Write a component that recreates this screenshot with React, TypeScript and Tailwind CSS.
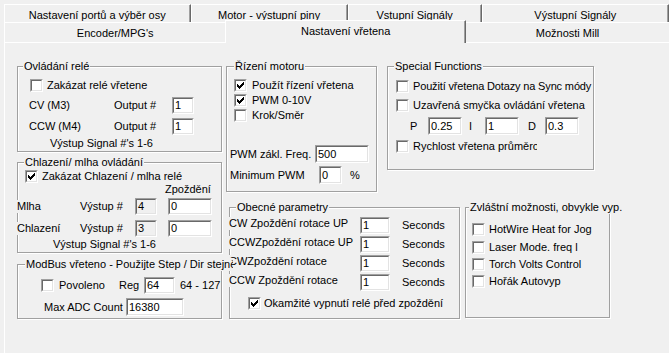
import React from "react";

const Check = ({ checked = false }: { checked?: boolean }) => (
  <span className="inline-block shrink-0 w-[13px] h-[13px] border border-t-[#a0a0a0] border-l-[#a0a0a0] border-r-white border-b-white">
    <span className="flex items-center justify-center w-full h-full border border-t-[#696969] border-l-[#696969] border-r-[#e3e3e3] border-b-[#e3e3e3] bg-white">
      {checked && (
        <svg width="7" height="7" viewBox="0 0 7 7" shapeRendering="crispEdges">
          <path
            d="M0 2h1v3h-1z M1 3h1v3h-1z M2 4h1v3h-1z M3 3h1v3h-1z M4 2h1v3h-1z M5 1h1v3h-1z M6 0h1v3h-1z"
            fill="#000"
          />
        </svg>
      )}
    </span>
  </span>
);

const Edit = ({ value, cls, gray = false }: { value: string; cls: string; gray?: boolean }) => (
  <div className={`shrink-0 border border-t-[#a0a0a0] border-l-[#a0a0a0] border-r-white border-b-white ${cls}`}>
    <div
      className={`flex items-center h-full pl-[1px] border border-t-[#696969] border-l-[#696969] border-r-[#e3e3e3] border-b-[#e3e3e3] ${
        gray ? "bg-[#f0f0f0]" : "bg-white"
      }`}
    >
      {value}
    </div>
  </div>
);

const Group = ({
  title,
  titleCls,
  cls,
  children,
}: {
  title: string;
  titleCls: string;
  cls: string;
  children?: React.ReactNode;
}) => (
  <div className={`relative shrink-0 border border-[#a0a0a0] shadow-[inset_1px_1px_0_#fff,1px_1px_0_#fff] ${cls}`}>
    <span className={`absolute -top-[7px] px-[1px] bg-[#f0f0f0] whitespace-nowrap ${titleCls}`}>{title}</span>
    {children}
  </div>
);

const CheckRow = ({ label, checked = false, cls }: { label: React.ReactNode; checked?: boolean; cls: string }) => (
  <div className={`flex items-center h-[13px] whitespace-nowrap ${cls}`}>
    <Check checked={checked} />
    {label}
  </div>
);

const TopTab = ({ label, cls }: { label: string; cls: string }) => (
  <div
    className={`flex justify-center pt-[3px] leading-[14px] border-t border-l border-t-white border-l-white border-r border-r-[#696969] shadow-[inset_-1px_0_0_#a0a0a0] whitespace-nowrap ${cls}`}
  >
    {label}
  </div>
);

const DelayRow = ({ label, cls }: { label: string; cls: string }) => (
  <div className={`flex h-[17px] ${cls}`}>
    <span className="-ml-[1px] w-[131px] h-[13px] self-start bg-[#f0f0f0] whitespace-nowrap">{label}</span>
    <Edit value="1" cls="w-[30px] h-[17px]" />
    <span className="ml-[12px] self-center">Seconds</span>
  </div>
);

export default function App() {
  return (
    <div className="relative w-[669px] h-[353px] overflow-hidden bg-[#f0f0f0] text-black text-[11px] leading-[13px] font-['Liberation_Sans',Arial,sans-serif]">
      {/* back tab row */}
      <div className="flex h-[18px] ml-[4px] mt-[4px]">
        <TopTab label="Nastavení portů a výběr osy" cls="w-[209px]" />
        <TopTab label="Motor - výstupní piny" cls="w-[176px]" />
        <TopTab label="Vstupní Signály" cls="w-[150px]" />
        <TopTab label="Výstupní Signály" cls="w-[210px]" />
      </div>
      {/* front tab row */}
      <div className="flex h-[20px] ml-[4px]">
        <div className="flex justify-center w-[229px] pt-[3px] leading-[14px] border-t border-l border-white">Encoder/MPG's</div>
        <div className="relative z-10 -mt-[2px] h-[23px] w-[249px] flex justify-center pt-[3px] leading-[14px] bg-[#f0f0f0] border-t border-l border-t-white border-l-white border-r border-r-[#696969] shadow-[inset_-1px_0_0_#a0a0a0]">
          Nastavení vřetena
        </div>
        <div className="flex justify-center w-[210px] pt-[3px] leading-[14px] border-t border-white">Možnosti Mill</div>
      </div>

      {/* tab page */}
      <div className="relative ml-[4px] h-[311px] border-t border-l border-white flex items-start">
        {/* left column */}
        <div className="ml-[12px] mt-[23px] w-[205px] flex flex-col">
          <Group title="Ovládání relé" titleCls="left-[5px]" cls="w-[205px] h-[86px]">
            <CheckRow cls="ml-[12px] mt-[12px] gap-[4px]" label={<span>Zakázat relé vřetene</span>} />
            <div className="flex items-center h-[17px] mt-[5px] ml-[11px]">
              <span className="w-[85px]">CV (M3)</span>
              <span className="w-[58px]">Output #</span>
              <Edit value="1" cls="w-[22px] h-[17px]" />
            </div>
            <div className="flex items-center h-[17px] mt-[4px] ml-[11px]">
              <span className="w-[85px]">CCW (M4)</span>
              <span className="w-[58px]">Output #</span>
              <Edit value="1" cls="w-[22px] h-[17px]" />
            </div>
            <div className="mt-[2px] ml-[32px]">Výstup Signal #'s 1-6</div>
          </Group>

          <Group title="Chlazení/ mlha ovládání" titleCls="left-[6px]" cls="mt-[10px] w-[205px] h-[91px]">
            <CheckRow cls="ml-[7px] mt-[7px] gap-[4px]" checked label={<span>Zakázat Chlazení / mlha relé</span>} />
            <div className="pl-[147px] h-[13px]">Zpoždění</div>
            <div className="flex items-center h-[17px] mt-[2px]">
              <span className="-ml-[1px] w-[63px] bg-[#f0f0f0]">Mlha</span>
              <span className="w-[55px]">Výstup #</span>
              <Edit value="4" gray cls="w-[22px] h-[17px]" />
              <Edit value="0" cls="ml-[11px] w-[44px] h-[17px]" />
            </div>
            <div className="flex items-center h-[17px] mt-[5px]">
              <span className="-ml-[1px] w-[63px] bg-[#f0f0f0]">Chlazení</span>
              <span className="w-[55px]">Výstup #</span>
              <Edit value="3" gray cls="w-[22px] h-[17px]" />
              <Edit value="0" cls="ml-[11px] w-[44px] h-[17px]" />
            </div>
            <div className="mt-[1px] ml-[35px]">Výstup Signal #'s 1-6</div>
          </Group>

          <Group
            title="ModBus vřeteno - Použijte Step / Dir stejně jako výstup"
            titleCls="left-[7px] z-20 w-[208px] overflow-hidden"
            cls="mt-[11px] w-[205px] h-[55px]"
          >
            <div className="flex items-center h-[17px] mt-[12px] ml-[23px]">
              <Check />
              <span className="ml-[5px] w-[60px]">Povoleno</span>
              <span className="w-[25px]">Reg</span>
              <Edit value="64" cls="w-[31px] h-[17px]" />
              <span className="ml-[5px]">64 - 127</span>
            </div>
            <div className="flex items-center h-[18px] mt-[4px] ml-[26px]">
              <span className="w-[82px]">Max ADC Count</span>
              <Edit value="16380" cls="w-[58px] h-[18px]" />
            </div>
          </Group>
        </div>

        {/* right area */}
        <div className="ml-[4px] mt-[23px] flex flex-col">
          <div className="flex items-start">
            <Group title="Řízení motoru" titleCls="left-[7px]" cls="w-[151px] h-[126px]">
              <CheckRow cls="ml-[7px] mt-[12px] gap-[5px]" checked label={<span>Použít řízení vřetena</span>} />
              <CheckRow cls="ml-[7px] mt-[2px] gap-[5px]" checked label={<span>PWM 0-10V</span>} />
              <CheckRow cls="ml-[7px] mt-[2px] gap-[5px]" label={<span>Krok/Směr</span>} />
              <div className="flex items-center h-[18px] mt-[23px] ml-[3px]">
                <span className="w-[85px] whitespace-nowrap">PWM zákl. Freq.</span>
                <Edit value="500" cls="w-[54px] h-[18px]" />
              </div>
              <div className="flex items-center h-[18px] mt-[3px] ml-[3px]">
                <span className="w-[89px] whitespace-nowrap">Minimum PWM</span>
                <Edit value="0" cls="w-[23px] h-[18px]" />
                <span className="ml-[8px]">%</span>
              </div>
            </Group>

            <Group title="Special Functions" titleCls="left-[6px]" cls="ml-[10px] w-[207px] h-[104px]">
              <CheckRow
                cls="ml-[8px] mt-[13px] gap-[4px]"
                label={<span className="w-[179px] overflow-hidden tracking-[-0.15px]">Použití vřetena Dotazy na Sync módy</span>}
              />
              <CheckRow cls="ml-[8px] mt-[6px] gap-[4px]" label={<span>Uzavřená smyčka ovládání vřetena</span>} />
              <div className="flex items-center h-[18px] mt-[5px] ml-[22px]">
                <span className="w-[18px]">P</span>
                <Edit value="0.25" cls="w-[34px] h-[18px]" />
                <span className="ml-[7px] w-[16px]">I</span>
                <Edit value="1" cls="w-[34px] h-[18px]" />
                <span className="ml-[9px] w-[17px]">D</span>
                <Edit value="0.3" cls="w-[34px] h-[18px]" />
              </div>
              <CheckRow
                cls="ml-[8px] mt-[5px] gap-[4px]"
                label={<span className="w-[124px] overflow-hidden">Rychlost vřetena průměrování</span>}
              />
            </Group>
          </div>

          <div className="flex items-start mt-[15px]">
            <Group title="Obecné parametry" titleCls="left-[6px]" cls="ml-[3px] w-[231px] h-[112px]">
              <DelayRow label="CW Zpoždění rotace UP" cls="mt-[9px]" />
              <DelayRow label="CCWZpoždění rotace UP" cls="mt-[2px]" />
              <DelayRow label="CWZpoždění rotace" cls="mt-[2px]" />
              <DelayRow label="CCW Zpoždění rotace" cls="mt-[2px]" />
              <CheckRow cls="ml-[18px] mt-[6px] gap-[3px]" checked label={<span>Okamžité vypnutí relé před zpoždění</span>} />
            </Group>

            <Group title="Zvláštní možnosti, obvykle vyp." titleCls="left-[3px]" cls="ml-[5px] w-[145px] h-[111px]">
              <CheckRow cls="ml-[6px] mt-[15px] gap-[4px]" label={<span>HotWire Heat for Jog</span>} />
              <CheckRow cls="ml-[6px] mt-[5px] gap-[4px]" label={<span>Laser Mode. freq l</span>} />
              <CheckRow cls="ml-[6px] mt-[4px] gap-[4px]" label={<span>Torch Volts Control</span>} />
              <CheckRow cls="ml-[6px] mt-[4px] gap-[4px]" label={<span>Hořák Autovyp</span>} />
            </Group>
          </div>
        </div>
      </div>
    </div>
  );
}
